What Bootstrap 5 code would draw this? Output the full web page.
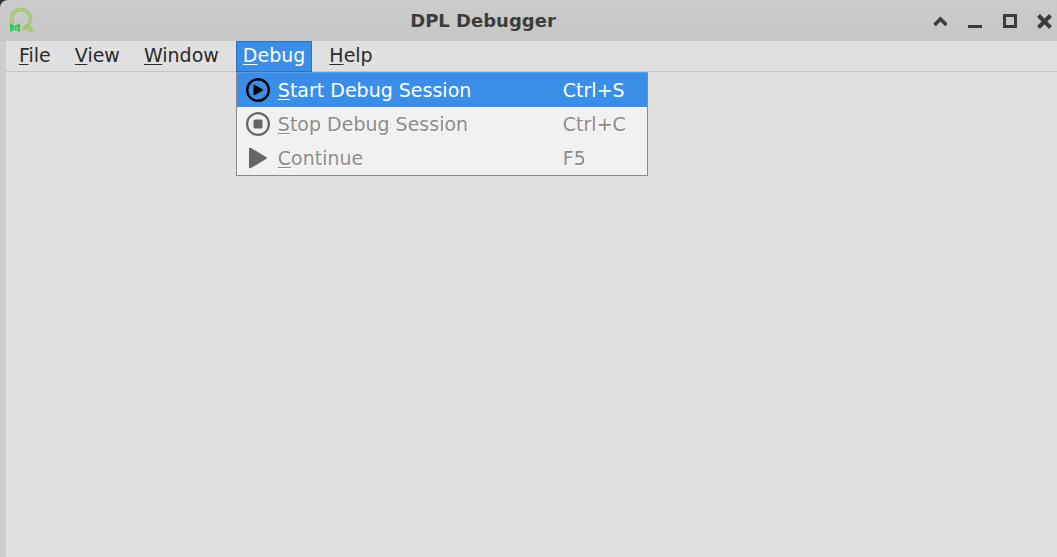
<!DOCTYPE html>
<html lang="en">
<head>
<meta charset="utf-8">
<meta name="viewport" content="width=device-width, initial-scale=1">
<title>DPL Debugger</title>
<link href="https://cdn.jsdelivr.net/npm/bootstrap@5.3.0/dist/css/bootstrap.min.css" rel="stylesheet">
<style>
  body {
    font-family: "DejaVu Sans", sans-serif;
    font-size: 19px;
    line-height: 28px;
    color: #2b2b2b;
    background: #cdcdcd;
  }
  .corner { background: #333; }
  .title-bar {
    height: 41px;
    background: linear-gradient(#cbcbcb, #c6c6c6);
    padding: 0 5px 0 9px;
    color: #3c3c3c;
    border-top-left-radius: 8px;
  }
  .app-title { font-size: 18px; font-weight: 700; line-height: 28px; }
  .win-controls { gap: 19px; }
  .win-controls button { line-height: 0; color: #3c3c3c; }
  .workspace { margin-left: 6px; background: #e0e0e0; }
  .menu-bar { height: 31px; padding-left: 6px; gap: 10px; border-bottom: 1px solid #c4c4c4; }
  .menu-top {
    height: 31px;
    line-height: 24px;
    padding: 0 6px 4px;
    border: 1px solid transparent;
    color: #2b2b2b;
    background: transparent;
  }
  .menu-top.show { background: #3a8ee8; border-color: #2b71bd; color: #fff; }
  u { text-underline-offset: 2px; text-decoration-thickness: 1px; text-decoration-skip-ink: none; }
  .debug-menu {
    top: 100%;
    left: 0;
    width: 412px;
    border: 1px solid #8a8a8a;
    border-top-color: #5a9fe6;
    border-radius: 0;
    background: #f1f1f1;
    padding: 0;
    margin: 1px 0 0;
    font-size: 19px;
  }
  .debug-menu .dropdown-item { height: 34px; line-height: 34px; padding: 0 0 0 9px; color: #fff; }
  .debug-menu .dropdown-item.active { background: #3a8ee8; }
  .debug-menu .dropdown-item:disabled { color: #8c8c8c; text-shadow: 1px 1px #fff; }
  .item-icon { width: 24px; height: 24px; margin-right: 8px; flex: none; }
  .item-key { width: 84px; }
</style>
</head>
<body class="min-vh-100 d-flex flex-column">
  <div class="corner">
    <header class="title-bar d-flex align-items-center">
      <svg class="d-block" width="26" height="28" viewBox="0 0 26 28" fill="none" aria-hidden="true">
        <circle cx="12" cy="12" r="9.500" stroke="#a3c46c" stroke-width="3.600"/>
        <circle cx="12" cy="12" r="9.600" stroke="#c8d6ac" stroke-width="1" stroke-dasharray="4 2"/>
        <path d="M17 18l7 7" stroke="#a3c46c" stroke-width="4"/>
        <path d="M18 19l6 6" stroke="#c8d6ac" stroke-width="1"/>
        <path d="M0 17h12v9H0z" fill="#c9c9c9"/>
        <path d="M1 16l5 3 5-3v9l-5-2-5 2z" fill="#34c759"/>
        <path d="M5 20v3M8 20v3" stroke="#a6dfb1"/>
      </svg>
      <h1 class="app-title m-0 flex-grow-1 text-center">DPL Debugger</h1>
      <div class="win-controls d-flex">
        <button class="border-0 bg-transparent p-0" aria-label="Shade"><svg width="16" height="16" viewBox="0 0 16 16" fill="none" stroke="currentColor" stroke-width="3.600"><path d="M3.500 12L9.500 6l6 6"/></svg></button>
        <button class="border-0 bg-transparent p-0" aria-label="Minimize"><svg width="16" height="16" viewBox="0 0 16 16" fill="currentColor"><path d="M2 12h14v3H2z"/></svg></button>
        <button class="border-0 bg-transparent p-0" aria-label="Maximize"><svg width="16" height="16" viewBox="0 0 16 16" fill="none" stroke="currentColor" stroke-width="3"><path d="M3.500 2.500h11v11h-11z"/></svg></button>
        <button class="border-0 bg-transparent p-0" aria-label="Close"><svg width="16" height="16" viewBox="0 0 16 16" fill="none" stroke="currentColor" stroke-width="4"><path d="M2.500 2.500l12 12M14.500 2.500l-12 12"/></svg></button>
      </div>
    </header>
  </div>
  <main class="workspace flex-grow-1">
    <nav class="menu-bar d-flex" aria-label="Main menu">
      <button class="menu-top"><u>F</u>ile</button>
      <button class="menu-top"><u>V</u>iew</button>
      <button class="menu-top"><u>W</u>indow</button>
      <div class="dropdown d-flex">
        <button class="menu-top show" aria-expanded="true"><u>D</u>ebug</button>
        <div class="dropdown-menu debug-menu show">
          <button class="dropdown-item active d-flex align-items-center">
            <svg class="item-icon" viewBox="0 0 24 24" fill="none" aria-hidden="true"><circle cx="12" cy="12" r="10.800" stroke="#000" stroke-width="2.400"/><path d="M8 7l9 5-9 5z" fill="#000" stroke="#000" stroke-linejoin="round"/></svg>
            <span class="flex-grow-1"><u>S</u>tart Debug Session</span><span class="item-key">Ctrl+S</span>
          </button>
          <button class="dropdown-item d-flex align-items-center" disabled>
            <svg class="item-icon" viewBox="0 0 24 24" fill="none" aria-hidden="true"><circle cx="12" cy="12" r="10.900" stroke="#666" stroke-width="2.200"/><rect x="7.500" y="7.500" width="9" height="9" rx="1.500" fill="#666"/></svg>
            <span class="flex-grow-1"><u>S</u>top Debug Session</span><span class="item-key">Ctrl+C</span>
          </button>
          <button class="dropdown-item d-flex align-items-center" disabled>
            <svg class="item-icon" viewBox="0 0 24 24" aria-hidden="true"><path d="M3 3q0-2 2-1l15 9q2 1 0 2L5 22q-2 1-2-1z" fill="#666"/></svg>
            <span class="flex-grow-1"><u>C</u>ontinue</span><span class="item-key">F5</span>
          </button>
        </div>
      </div>
      <button class="menu-top"><u>H</u>elp</button>
    </nav>
  </main>
<script src="https://cdn.jsdelivr.net/npm/bootstrap@5.3.0/dist/js/bootstrap.bundle.min.js"></script>
</body>
</html>
